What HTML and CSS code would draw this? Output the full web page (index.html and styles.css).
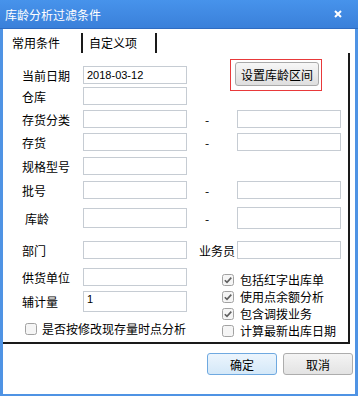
FILE: index.html
```html
<!DOCTYPE html>
<html lang="zh-CN">
<head>
  <meta charset="UTF-8">
  <title>库龄分析过滤条件</title>
  <link rel="stylesheet" href="styles.css">
</head>
<body>
  <div class="window">
    <div class="titlebar">
      <span>库龄分析过滤条件</span>
      <svg class="close" width="8" height="8" viewBox="0 0 8 8"><path d="M1 1L7 7M7 1L1 7"/></svg>
    </div>

    <div class="tabs">
      <div class="tab tab-main">常用条件</div>
      <div class="tab tab-extra">自定义项</div>
    </div>

    <div class="panel">
      <div class="row">
        <span class="label">当前日期</span>
        <div class="field">2018-03-12</div>
        <div class="mark"><button type="button" class="range-btn">设置库龄区间</button></div>
      </div>
      <div class="row gap-3">
        <span class="label">仓库</span>
        <div class="field"></div>
      </div>
      <div class="row gap-5">
        <span class="label">存货分类</span>
        <div class="field"></div>
        <span class="mid">-</span>
        <div class="field"></div>
      </div>
      <div class="row gap-5">
        <span class="label">存货</span>
        <div class="field"></div>
        <span class="mid">-</span>
        <div class="field"></div>
      </div>
      <div class="row gap-6">
        <span class="label">规格型号</span>
        <div class="field"></div>
      </div>
      <div class="row gap-6">
        <span class="label">批号</span>
        <div class="field"></div>
        <span class="mid">-</span>
        <div class="field"></div>
      </div>
      <div class="row row-tall gap-8">
        <span class="label indent">库龄</span>
        <div class="field field-20"></div>
        <span class="mid">-</span>
        <div class="field field-22"></div>
      </div>
      <div class="row gap-12">
        <span class="label">部门</span>
        <div class="field"></div>
        <span class="mid staff">业务员</span>
        <div class="field"></div>
      </div>

      <div class="lower">
        <div class="lower-left">
          <div class="row">
            <span class="label">供货单位</span>
            <div class="field"></div>
          </div>
          <div class="row row-21 gap-5">
            <span class="label">辅计量</span>
            <div class="field field-21">1</div>
          </div>
          <label class="check solo">
            <svg class="box" width="12" height="12" viewBox="0 0 12 12"><rect x="0.5" y="0.5" width="11" height="11" rx="2"/></svg>
            是否按修改现存量时点分析
          </label>
        </div>

        <div class="checks">
          <label class="check">
            <svg class="box" width="12" height="12" viewBox="0 0 12 12"><rect x="0.5" y="0.5" width="11" height="11" rx="2"/><path d="M2.8 6.2L5 8.4L9.3 3.6"/></svg>
            包括红字出库单
          </label>
          <label class="check">
            <svg class="box" width="12" height="12" viewBox="0 0 12 12"><rect x="0.5" y="0.5" width="11" height="11" rx="2"/><path d="M2.8 6.2L5 8.4L9.3 3.6"/></svg>
            使用点余额分析
          </label>
          <label class="check">
            <svg class="box" width="12" height="12" viewBox="0 0 12 12"><rect x="0.5" y="0.5" width="11" height="11" rx="2"/><path d="M2.8 6.2L5 8.4L9.3 3.6"/></svg>
            包含调拨业务
          </label>
          <label class="check">
            <svg class="box" width="12" height="12" viewBox="0 0 12 12"><rect x="0.5" y="0.5" width="11" height="11" rx="2"/></svg>
            计算最新出库日期
          </label>
        </div>
      </div>
    </div>

    <div class="footer">
      <button type="button" class="btn btn-default">确定</button>
      <button type="button" class="btn">取消</button>
    </div>
  </div>
</body>
</html>
```

FILE: styles.css
```css
* {
  box-sizing: border-box;
}
body {
  margin: 0;
  font-family: "Noto Sans CJK SC", sans-serif;
  font-size: 12px;
  color: #000;
  background-color: #fff;
}
.window {
  width: 358px;
  height: 396px;
  border: 3px solid #4f93e4;
  border-top: 0;
  border-bottom-width: 2px;
  background-color: #fff;
}
.titlebar {
  height: 29px;
  margin: 0 -3px;
  padding: 0 16px 0 5px;
  display: flex;
  align-items: center;
  justify-content: space-between;
  background: linear-gradient(#4793eb, #3a80da);
  border-bottom: 1px solid #2f6cc2;
  color: #fff;
}
.close path {
  stroke: #fff;
  stroke-width: 2;
}
.tabs {
  display: flex;
  height: 24px;
}
.tab {
  margin-top: 4px;
  height: 20px;
  line-height: 20px;
  border-right: 2px solid #1a1a1a;
}
.tab-main {
  width: 80px;
  padding-left: 9px;
}
.tab-extra {
  width: 74px;
  padding-left: 6px;
}
.panel {
  width: 347px;
  height: 291px;
  padding: 13px 0 0 19px;
  border-right: 2px solid #1a1a1a;
  border-bottom: 2px solid #1a1a1a;
}
.row {
  display: flex;
  align-items: center;
  height: 18px;
}
.row-tall {
  height: 22px;
}
.row-21 {
  height: 21px;
}
.gap-3 { margin-top: 3px; }
.gap-5 { margin-top: 5px; }
.gap-6 { margin-top: 6px; }
.gap-8 { margin-top: 8px; }
.gap-12 { margin-top: 12px; }
.label {
  flex: none;
  width: 61px;
  white-space: nowrap;
}
.label.indent {
  padding-left: 3px;
}
.field {
  flex: none;
  width: 104px;
  height: 18px;
  padding-left: 3px;
  border: 1px solid #c6ccd3;
  font: 11px "Liberation Sans", sans-serif;
  line-height: 16px;
}
.field-20 { height: 20px; }
.field-22 { height: 22px; }
.field-21 {
  height: 21px;
  line-height: 15px;
}
.mid {
  flex: none;
  width: 50px;
  padding-left: 18px;
}
.mid.staff {
  padding: 0 2px 0 0;
  text-align: right;
}
.mark {
  flex: none;
  margin-left: 43px;
  padding: 2px 2px 4px 4px;
  border: 1px solid #e8393a;
}
.range-btn {
  display: block;
  width: 84px;
  height: 24px;
  padding: 0;
  border: 1px solid #a9a9a9;
  border-radius: 3px;
  background: linear-gradient(#f7f7f7, #dedede);
  font: 12px "Noto Sans CJK SC", sans-serif;
  color: #000;
}
.lower {
  display: flex;
  margin-top: 9px;
}
.lower-left {
  flex: none;
  width: 165px;
}
.checks {
  margin-left: 35px;
  padding-top: 3px;
}
.check {
  display: flex;
  align-items: center;
  gap: 6px;
  height: 17px;
  white-space: nowrap;
}
.check.solo {
  margin-top: 9px;
  height: 15px;
  padding-left: 3px;
  gap: 5px;
}
.box {
  flex: none;
}
.box rect {
  fill: #f5f5f5;
  stroke: #a2a2a2;
}
.box path {
  fill: none;
  stroke: #5f5f5f;
  stroke-width: 1.6;
}
.footer {
  display: flex;
  justify-content: flex-end;
  gap: 6px;
  padding: 9px 2px 0 0;
}
.btn {
  width: 70px;
  height: 22px;
  padding: 0;
  border: 1px solid #adadad;
  border-radius: 3px;
  background: linear-gradient(#f4f4f4, #e3e3e3);
  font: 12px "Noto Sans CJK SC", sans-serif;
  color: #000;
}
.btn-default {
  border-color: #6fa9e0;
  background: linear-gradient(#ecf5fd, #d4e8f8);
}
```
